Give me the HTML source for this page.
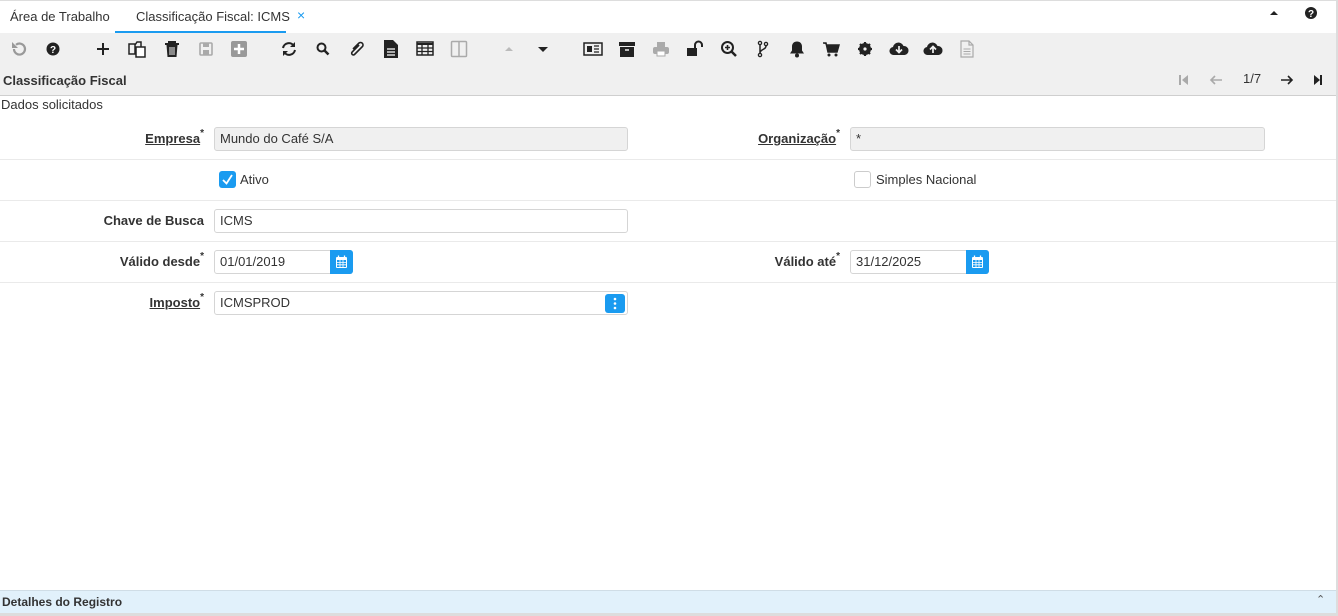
<!DOCTYPE html>
<html><head><meta charset="utf-8"><style>
*{margin:0;padding:0;box-sizing:border-box}
body{width:1338px;height:616px;position:relative;background:#fff;font-family:"Liberation Sans",sans-serif;font-size:13px;color:#333;overflow:hidden}
.a{position:absolute}
.tb{top:33px;left:0;width:1336px;height:63px;background:#f0f0f0;border-bottom:1px solid #cfcfcf}
.ic{position:absolute;top:40px;width:18px;height:18px}
.lbl{position:absolute;font-weight:bold;font-size:13px;text-align:right;color:#333}
.lbl u{text-decoration:underline}
.lbl sup{font-size:10px;position:relative;top:-3px;vertical-align:top}
.in{position:absolute;height:24px;border:1px solid #d5d5d5;border-radius:3px;padding-left:5px;line-height:22px;font-size:13px;color:#333;background:#fff}
.ro{background:#f0f0f0}
.sep{position:absolute;left:0;width:1336px;height:1px;background:#eaeaea}
.cal{position:absolute;top:-1px;right:-1px;width:23px;height:24px;background:#1a9bf0;border-radius:0 3px 3px 0}
</style></head><body>
<div class="a" style="top:0;left:0;width:1338px;height:1px;background:#ddd"></div>
<div class="a" style="top:0;right:0;width:2px;height:616px;background:#ddd"></div>
<div class="a" style="top:9px;left:10px;font-size:13px">Área de Trabalho</div>
<div class="a" style="top:9px;left:136px;font-size:13px">Classificação Fiscal: ICMS</div>
<div class="a" style="top:7px;left:297px;font-size:14px;color:#1a9bf0">×</div>
<div class="a" style="top:31px;left:115px;width:171px;height:2px;background:#1a9bf0"></div>
<svg class="a" style="top:10px;left:1269px" width="10" height="6"><path d="M1 5L5 1L9 5Z" fill="#222"/></svg>
<svg class="a" style="top:7px;left:1305px" width="12" height="12"><circle cx="6" cy="6" r="6" fill="#222"/><text x="6" y="10" font-size="10" font-weight="bold" fill="#fff" text-anchor="middle" font-family="Liberation Sans">?</text></svg>
<div class="a tb"></div>
<svg class="ic" style="left:10px" viewBox="0 0 18 18"><path d="M4 9a5.5 5.5 0 1 0 2-4.2" fill="none" stroke="#999" stroke-width="2.2"/><path d="M2 2v6h6z" fill="#999"/></svg>
<svg class="ic" style="left:45px" viewBox="0 0 18 18"><circle cx="8" cy="9" r="6.5" fill="#222"/><text x="8" y="13" font-size="10" font-weight="bold" fill="#fff" text-anchor="middle" font-family="Liberation Sans">?</text></svg>
<svg class="ic" style="left:94px" viewBox="0 0 18 18"><path d="M9 3v12M3 9h12" stroke="#222" stroke-width="2"/></svg>
<svg class="ic" style="left:128px" viewBox="0 0 18 18"><path d="M1 4h6l0 10H1z M7 5l2-3h4v8" fill="none" stroke="#222" stroke-width="1.5"/><path d="M8 7h9v10H8z" fill="#fff" stroke="#222" stroke-width="1.5"/></svg>
<svg class="ic" style="left:163px" viewBox="0 0 18 18"><path d="M2 4h14M6 4V2h6v2" stroke="#222" stroke-width="2" fill="none"/><path d="M3.5 5h11l-1 12h-9z" fill="#222"/><path d="M7 7v8M9 7v8M11 7v8" stroke="#f0f0f0" stroke-width="1"/></svg>
<svg class="ic" style="left:197px" viewBox="0 0 18 18"><rect x="3" y="3" width="12" height="12" rx="1" fill="none" stroke="#aaa" stroke-width="1.6"/><rect x="6" y="3" width="6" height="4" fill="#aaa"/><rect x="6" y="10" width="6" height="5" fill="#aaa"/></svg>
<svg class="ic" style="left:230px" viewBox="0 0 18 18"><rect x="1" y="1" width="16" height="16" rx="2" fill="#999"/><path d="M9 4v10M4 9h10" stroke="#fff" stroke-width="2.5"/></svg>
<svg class="ic" style="left:280px" viewBox="0 0 18 18"><path d="M3 8a6 6 0 0 1 11-2M15 10a6 6 0 0 1-11 2" fill="none" stroke="#222" stroke-width="2"/><path d="M15 2v5h-5zM3 16v-5h5z" fill="#222"/></svg>
<svg class="ic" style="left:314px" viewBox="0 0 18 18"><circle cx="7.5" cy="7.5" r="4" fill="none" stroke="#222" stroke-width="2"/><path d="M10.5 10.5l4 4" stroke="#222" stroke-width="2.5"/></svg>
<svg class="ic" style="left:348px" viewBox="0 0 18 18"><path d="M5 9l6-6a2.5 2.5 0 0 1 3.5 3.5l-8 8a1.7 1.7 0 0 1-2.4-2.4l7-7" fill="none" stroke="#222" stroke-width="1.6"/></svg>
<svg class="ic" style="left:382px" viewBox="0 0 18 18"><path d="M2 0h9l5 5v13H2z" fill="#222"/><path d="M5 9h8M5 12h8M5 15h8" stroke="#fff" stroke-width="1.3"/></svg>
<svg class="ic" style="left:416px" viewBox="0 0 18 18"><rect x="1" y="2" width="16" height="13" fill="none" stroke="#222" stroke-width="1.5"/><path d="M1 3h16v2H1z" fill="#222"/><path d="M1 8h16M1 11.5h16M6 3v12M12 3v12" stroke="#222" stroke-width="1.3"/></svg>
<svg class="ic" style="left:450px" viewBox="0 0 18 18"><rect x="1.5" y="1.5" width="15" height="15" rx="1" fill="none" stroke="#aaa" stroke-width="1.5"/><path d="M9 2v14" stroke="#aaa" stroke-width="1.5"/></svg>
<svg class="ic" style="left:500px" viewBox="0 0 18 18"><path d="M5 11l4-4 4 4z" fill="#bbb"/></svg>
<svg class="ic" style="left:534px" viewBox="0 0 18 18"><path d="M4 7h10l-5 5z" fill="#222"/></svg>
<svg class="ic" style="left:583px;width:20px" viewBox="0 0 20 18"><rect x="1" y="3" width="18" height="12" fill="none" stroke="#222" stroke-width="1.5"/><rect x="4" y="6" width="5" height="6" fill="#222"/><path d="M11 6h5M11 9h5M11 12h5" stroke="#222" stroke-width="1.3"/></svg>
<svg class="ic" style="left:618px" viewBox="0 0 18 18"><rect x="1" y="2" width="16" height="4" fill="#222"/><rect x="2" y="7" width="14" height="10" fill="#222"/><path d="M7 10h4" stroke="#f0f0f0" stroke-width="1.5"/></svg>
<svg class="ic" style="left:652px" viewBox="0 0 18 18"><rect x="5" y="2" width="8" height="5" fill="#aaa"/><rect x="1" y="7" width="16" height="7" rx="2" fill="#aaa"/><rect x="5" y="11" width="8" height="5" fill="#fff" stroke="#aaa"/></svg>
<svg class="ic" style="left:686px" viewBox="0 0 18 18"><rect x="1" y="8" width="10" height="8" fill="#222"/><path d="M9 8V5a3.5 3.5 0 0 1 7 0v2" fill="none" stroke="#222" stroke-width="2"/></svg>
<svg class="ic" style="left:720px" viewBox="0 0 18 18"><circle cx="7.5" cy="7.5" r="5.5" fill="none" stroke="#222" stroke-width="2"/><path d="M7.5 5v5M5 7.5h5" stroke="#222" stroke-width="1.6"/><path d="M11.5 11.5l4.5 4.5" stroke="#222" stroke-width="2.5"/></svg>
<svg class="ic" style="left:754px" viewBox="0 0 18 18"><circle cx="6" cy="3" r="1.6" fill="none" stroke="#222" stroke-width="1.3"/><circle cx="12" cy="4" r="1.6" fill="none" stroke="#222" stroke-width="1.3"/><circle cx="6" cy="15" r="1.6" fill="none" stroke="#222" stroke-width="1.3"/><path d="M6 5v8M12 6c0 4-6 3-6 7" fill="none" stroke="#222" stroke-width="1.5"/></svg>
<svg class="ic" style="left:788px" viewBox="0 0 18 18"><path d="M9 1.5c-3 0-5 2-5 5v4l-2 3h14l-2-3v-4c0-3-2-5-5-5z" fill="#222"/><circle cx="9" cy="15.5" r="2" fill="#222"/></svg>
<svg class="ic" style="left:822px" viewBox="0 0 18 18"><path d="M1 3h3l2 9h9l2-7H5" fill="#222" stroke="#222" stroke-width="1.5"/><circle cx="7" cy="15" r="1.5" fill="#222"/><circle cx="14" cy="15" r="1.5" fill="#222"/></svg>
<svg class="ic" style="left:856px" viewBox="0 0 18 18"><circle cx="9" cy="9" r="4.5" fill="none" stroke="#222" stroke-width="3"/><path d="M9 2v14M2 9h14M4 4l10 10M14 4L4 14" stroke="#222" stroke-width="2.2"/><circle cx="9" cy="9" r="1.6" fill="#f0f0f0"/></svg>
<svg class="ic" style="left:889px;width:20px" viewBox="0 0 20 18"><path d="M5 15a4 4 0 0 1-1-8 5.5 5.5 0 0 1 10.5-1 4.5 4.5 0 0 1 1 9z" fill="#222"/><path d="M10 6v6M7 9.5l3 3 3-3" fill="none" stroke="#f0f0f0" stroke-width="1.7"/></svg>
<svg class="ic" style="left:923px;width:20px" viewBox="0 0 20 18"><path d="M5 15a4 4 0 0 1-1-8 5.5 5.5 0 0 1 10.5-1 4.5 4.5 0 0 1 1 9z" fill="#222"/><path d="M10 13V7M7 9.5l3-3 3 3" fill="none" stroke="#f0f0f0" stroke-width="1.7"/></svg>
<svg class="ic" style="left:958px" viewBox="0 0 18 18"><path d="M3 1h8l4 4v12H3z M11 1v4h4" fill="none" stroke="#aaa" stroke-width="1.2"/><path d="M5.5 9h7M5.5 11.5h7M5.5 14h7" stroke="#aaa" stroke-width="1"/></svg>
<div class="a" style="top:73px;left:3px;font-weight:bold;font-size:13px">Classificação Fiscal</div>
<svg class="a" style="top:74px;left:1179px" width="10" height="12"><path d="M1 1v10" stroke="#aaa" stroke-width="2"/><path d="M9 1v10L3 6z" fill="#aaa"/></svg>
<svg class="a" style="top:74px;left:1209px" width="14" height="12"><path d="M13 6H2M6 2L2 6l4 4" fill="none" stroke="#aaa" stroke-width="1.6"/></svg>
<div class="a" style="top:71px;left:1243px;font-size:13px">1/7</div>
<svg class="a" style="top:74px;left:1280px" width="14" height="12"><path d="M1 6h11M8 2l4 4-4 4" fill="none" stroke="#222" stroke-width="1.6"/></svg>
<svg class="a" style="top:74px;left:1313px" width="10" height="12"><path d="M1 1v10L7 6z" fill="#222"/><path d="M8 1v10" stroke="#222" stroke-width="2"/></svg>
<div class="a" style="top:97px;left:1px;font-size:13px">Dados solicitados</div>
<div class="lbl" style="top:131px;left:0;width:204px"><u>Empresa</u><sup>*</sup></div>
<div class="in ro" style="top:127px;left:214px;width:414px">Mundo do Café S/A</div>
<div class="lbl" style="top:131px;left:600px;width:240px"><u>Organização</u><sup>*</sup></div>
<div class="in ro" style="top:127px;left:850px;width:415px">*</div>
<div class="sep" style="top:159px"></div>
<div class="a" style="top:171px;left:219px;width:17px;height:17px;background:#1a9bf0;border-radius:3px"></div>
<svg class="a" style="top:171px;left:219px" width="17" height="17"><path d="M4 9l3.5 3.5L13 4" fill="none" stroke="#fff" stroke-width="1.8"/></svg>
<div class="a" style="top:172px;left:240px">Ativo</div>
<div class="a" style="top:171px;left:854px;width:17px;height:17px;border:1px solid #ccc;border-radius:3px;background:#fff"></div>
<div class="a" style="top:172px;left:876px">Simples Nacional</div>
<div class="sep" style="top:200px"></div>
<div class="lbl" style="top:213px;left:0;width:204px">Chave de Busca</div>
<div class="in" style="top:209px;left:214px;width:414px">ICMS</div>
<div class="sep" style="top:241px"></div>
<div class="lbl" style="top:254px;left:0;width:204px">Válido desde<sup>*</sup></div>
<div class="in" style="top:250px;left:214px;width:139px">01/01/2019<div class="cal"><svg width="23" height="24"><rect x="6" y="7" width="11" height="11" rx="1" fill="#fff"/><rect x="7" y="10" width="9" height="7" fill="#1a9bf0"/><path d="M7 12.5h9M7 14.8h9M10 10v7M13 10v7" stroke="#fff" stroke-width=".8"/><path d="M8.5 5.5v2M14.5 5.5v2" stroke="#fff" stroke-width="1.3"/></svg></div></div>
<div class="lbl" style="top:254px;left:600px;width:240px">Válido até<sup>*</sup></div>
<div class="in" style="top:250px;left:850px;width:139px">31/12/2025<div class="cal"><svg width="23" height="24"><rect x="6" y="7" width="11" height="11" rx="1" fill="#fff"/><rect x="7" y="10" width="9" height="7" fill="#1a9bf0"/><path d="M7 12.5h9M7 14.8h9M10 10v7M13 10v7" stroke="#fff" stroke-width=".8"/><path d="M8.5 5.5v2M14.5 5.5v2" stroke="#fff" stroke-width="1.3"/></svg></div></div>
<div class="sep" style="top:282px"></div>
<div class="lbl" style="top:295px;left:0;width:204px"><u>Imposto</u><sup>*</sup></div>
<div class="in" style="top:291px;left:214px;width:414px">ICMSPROD<div class="a" style="top:2px;right:2px;width:20px;height:19px;background:#1a9bf0;border-radius:3px"><svg width="20" height="19"><circle cx="10" cy="5" r="1.3" fill="#fff"/><circle cx="10" cy="9.5" r="1.3" fill="#fff"/><circle cx="10" cy="14" r="1.3" fill="#fff"/></svg></div></div>
<div class="a" style="top:590px;left:0;width:1336px;height:23px;background:#e1f1fb;border-top:1px solid #cfdde6"></div>
<div class="a" style="top:595px;left:2px;font-weight:bold;font-size:12px">Detalhes do Registro</div>
<div class="a" style="top:593px;left:1316px;font-size:11px;color:#555">&#8963;</div>
<div class="a" style="top:613px;left:0;width:1338px;height:3px;background:#ddd"></div>
</body></html>
